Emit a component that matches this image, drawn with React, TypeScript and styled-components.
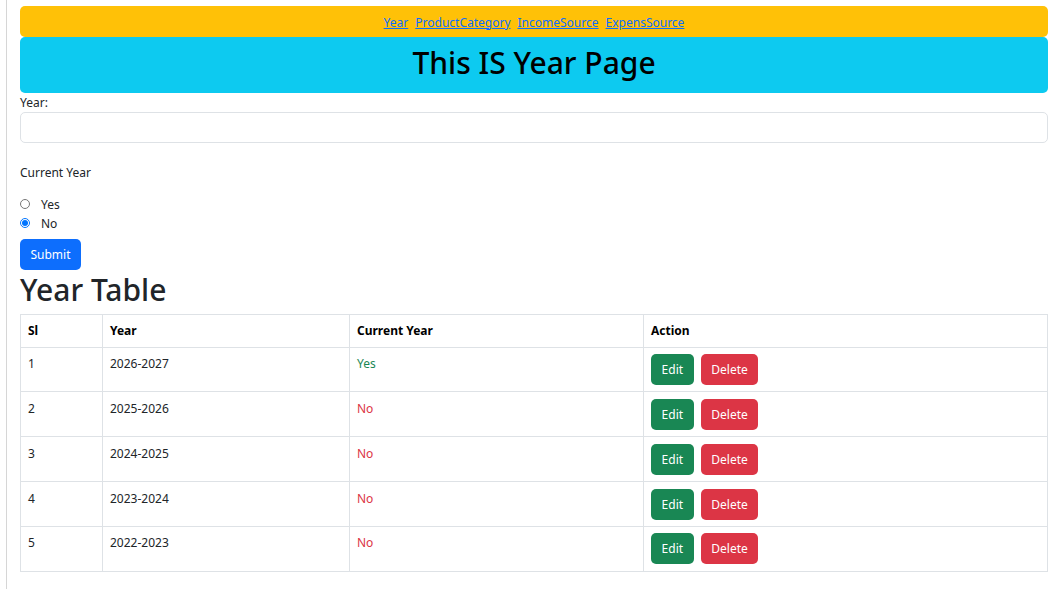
import React from "react";
import styled, { createGlobalStyle } from "styled-components";

const Global = createGlobalStyle`
  html, body { margin: 0; padding: 0; background: #fff; }
  body {
    font-family: "Noto Sans", "Open Sans", sans-serif;
    font-size: 12px;
    line-height: 19.2px;
    color: #212529;
  }
  * { box-sizing: border-box; }
`;

const Page = styled.div`
  margin-left: 6px;
  border-left: 1px solid #d6d6d6;
  min-height: 589px;
  padding: 6px 6px 0 13px;
`;

const NavBar = styled.nav`
  background: #ffc107;
  border-radius: 5px;
  padding: 6.5px 0 5.5px;
  display: flex;
  justify-content: center;
  gap: 7px;
  font-size: 12px;
`;

const NavLink = styled.a`
  color: #0d6efd;
  text-decoration: underline;
  cursor: pointer;
`;

const Banner = styled.h1`
  margin: 0;
  background: #0dcaf0;
  border-radius: 5px;
  color: #000;
  text-align: center;
  font-size: 30px;
  font-weight: 500;
  line-height: 38.4px;
  padding: 7px 0 10.6px;
`;

const Form = styled.form`
  display: flex;
  flex-direction: column;
  align-items: flex-start;
`;

const Label = styled.label`
  display: block;
`;

const TextInput = styled.input`
  width: 100%;
  height: 31px;
  border: 1px solid #dee2e6;
  border-radius: 5px;
  background: #fff;
  padding: 0 10px;
  font: inherit;
`;

const SectionLabel = styled.div`
  margin: 19.2px 0 12.8px;
`;

const RadioRow = styled.label`
  display: flex;
  align-items: center;
  gap: 11px;
  height: 19.2px;
`;

const Radio = styled.input`
  width: 10px;
  height: 10px;
  margin: 0;
`;

const Button = styled.button<{ $variant: "primary" | "success" | "danger" }>`
  font: inherit;
  color: #fff;
  border: 1px solid transparent;
  border-radius: 5px;
  padding: 5px 9.6px;
  line-height: 19.2px;
  height: 31px;
  background: ${(p) =>
    p.$variant === "primary" ? "#0d6efd" : p.$variant === "success" ? "#198754" : "#dc3545"};
  cursor: pointer;
`;

const SubmitButton = styled(Button)`
  margin-top: 6px;
  width: 61px;
  padding: 5px 0;
`;

const Heading = styled.h2`
  margin: 0 0 5.4px;
  padding-top: 2px;
  font-size: 30px;
  font-weight: 500;
  line-height: 36.4px;
  color: #212529;
`;

const Table = styled.table`
  width: 100%;
  border-collapse: collapse;
  table-layout: fixed;
  border: 1px solid #dee2e6;
`;

const Th = styled.th`
  text-align: left;
  font-weight: 700;
  color: #000;
  padding: 6.4px 7px 6.3px;
  border: 1px solid #dee2e6;
  vertical-align: top;
`;

const Td = styled.td<{ $tone?: "yes" | "no" }>`
  padding: 6.5px 7px 6.3px;
  border: 1px solid #dee2e6;
  vertical-align: top;
  color: ${(p) => (p.$tone === "yes" ? "#198754" : p.$tone === "no" ? "#dc3545" : "#212529")};
`;

const Actions = styled.div`
  display: flex;
  gap: 7px;
`;

const rows = [
  { sl: 1, year: "2026-2027", current: true },
  { sl: 2, year: "2025-2026", current: false },
  { sl: 3, year: "2024-2025", current: false },
  { sl: 4, year: "2023-2024", current: false },
  { sl: 5, year: "2022-2023", current: false },
];

export default function App() {
  return (
    <>
      <Global />
      <Page>
        <NavBar>
          <NavLink>Year</NavLink>
          <NavLink>ProductCategory</NavLink>
          <NavLink>IncomeSource</NavLink>
          <NavLink>ExpensSource</NavLink>
        </NavBar>
        <Banner>This IS Year Page</Banner>
        <Form onSubmit={(e) => e.preventDefault()}>
          <Label>Year:</Label>
          <TextInput type="text" />
          <SectionLabel>Current Year</SectionLabel>
          <RadioRow>
            <Radio type="radio" name="cur" />
            Yes
          </RadioRow>
          <RadioRow>
            <Radio type="radio" name="cur" defaultChecked />
            No
          </RadioRow>
          <SubmitButton $variant="primary" type="submit">Submit</SubmitButton>
        </Form>
        <Heading>Year Table</Heading>
        <Table>
          <colgroup>
            <col style={{ width: 82 }} />
            <col style={{ width: 247 }} />
            <col style={{ width: 294 }} />
            <col />
          </colgroup>
          <thead>
            <tr>
              <Th>Sl</Th>
              <Th>Year</Th>
              <Th>Current Year</Th>
              <Th>Action</Th>
            </tr>
          </thead>
          <tbody>
            {rows.map((r) => (
              <tr key={r.sl}>
                <Td>{r.sl}</Td>
                <Td>{r.year}</Td>
                <Td $tone={r.current ? "yes" : "no"}>{r.current ? "Yes" : "No"}</Td>
                <Td>
                  <Actions>
                    <Button $variant="success">Edit</Button>
                    <Button $variant="danger">Delete</Button>
                  </Actions>
                </Td>
              </tr>
            ))}
          </tbody>
        </Table>
      </Page>
    </>
  );
}
